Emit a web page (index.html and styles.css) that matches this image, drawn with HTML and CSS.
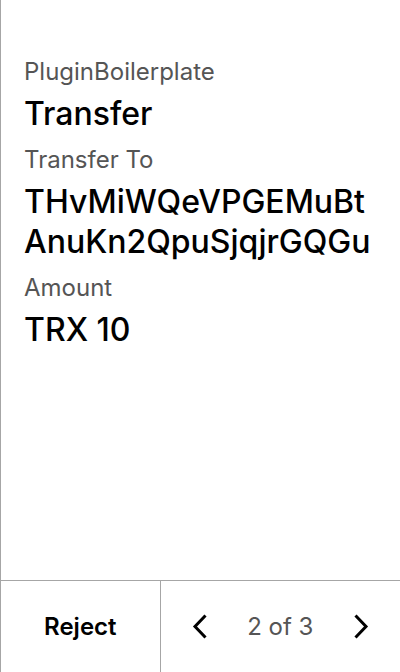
FILE: index.html
```html
<!DOCTYPE html>
<html lang="en">
<head>
<meta charset="utf-8">
<meta name="viewport" content="width=device-width, initial-scale=1">
<title>Transfer</title>
<link rel="stylesheet" href="styles.css">
</head>
<body>
<div class="screen">
  <main class="review">
    <dl class="fields">
      <dt>PluginBoilerplate</dt>
      <dd>Transfer</dd>
      <dt>Transfer To</dt>
      <dd>THvMiWQeVPGEMuBtAnuKn2QpuSjqjrGQGu</dd>
      <dt>Amount</dt>
      <dd>TRX 10</dd>
    </dl>
  </main>
  <footer class="footer">
    <button class="reject" type="button">Reject</button>
    <nav class="pager" aria-label="Pages">
      <button class="step" type="button" aria-label="Previous page">
        <svg width="40" height="40" viewBox="0 0 40 40"><path d="M24.500 8.500 14 19.500 24.500 30.500"/></svg>
      </button>
      <span class="position">2 of 3</span>
      <button class="step" type="button" aria-label="Next page">
        <svg width="40" height="40" viewBox="0 0 40 40"><path d="M15.500 8.500 26 19.500 15.500 30.500"/></svg>
      </button>
    </nav>
  </footer>
</div>
</body>
</html>
```

FILE: styles.css
```css
* {
  box-sizing: border-box;
}

body {
  margin: 0;
  background: #fff;
  color: #000;
  font-family: Inter, "Liberation Sans", sans-serif;
}

.screen {
  display: flex;
  flex-direction: column;
  min-height: 100vh;
  border-left: 1px solid #a6a6a6;
}

.review {
  flex: 1;
  padding: 56px 23px 24px;
}

.fields {
  margin: 0;
}

dt {
  color: #555;
  font-size: 24px;
  line-height: 32px;
}

dd {
  margin: 0;
  padding: 6px 0 10px;
  font-size: 32px;
  font-weight: 500;
  line-height: 40px;
  word-break: break-all;
}

.footer {
  display: grid;
  grid-template-columns: minmax(0, 2fr) minmax(0, 3fr);
  min-height: 92px;
  border-top: 1px solid #a6a6a6;
}

button {
  padding: 0;
  border: 0;
  background: none;
  color: inherit;
  font: inherit;
}

.reject {
  border-right: 1px solid #a6a6a6;
  font-size: 24px;
  font-weight: 600;
  line-height: 32px;
}

.pager {
  display: flex;
  align-items: center;
  justify-content: space-between;
  padding: 0 20px;
}

.step {
  display: flex;
}

.step svg {
  fill: none;
  stroke: #000;
  stroke-width: 3;
}

.position {
  color: #555;
  font-size: 24px;
  line-height: 32px;
}
```
